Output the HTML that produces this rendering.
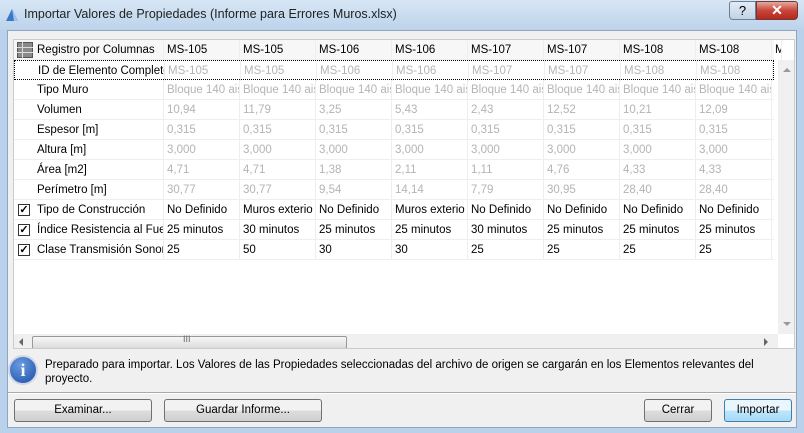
<!DOCTYPE html>
<html><head><meta charset="utf-8"><style>
*{box-sizing:border-box;margin:0;padding:0}
body{width:804px;height:433px;overflow:hidden;background:#b9d1ea;font-family:"Liberation Sans",sans-serif;font-size:11.5px;color:#000;position:relative}
.title{position:absolute;left:0;top:0;width:804px;height:30px;background:linear-gradient(#d7e6f5,#bcd3ea)}
.title span{position:absolute;left:24px;top:7px;font-size:12.5px;color:#222}
.client{position:absolute;left:7px;top:30px;width:790px;height:398px;background:#f0f0f0;border:1px solid #8ea6c0}
.grid{position:absolute;left:13px;top:39px;width:782px;height:310px;background:#fff;border:1px solid #ccc;overflow:hidden}
.row{position:absolute;left:0;height:20px;width:760px;border-bottom:1px solid #eee}
.c{position:absolute;top:0;height:20px;line-height:20px;white-space:nowrap;overflow:hidden;border-right:1px solid #eee;padding-left:3px}
.g{color:#b4b4b4}
.lab{left:0;width:150px;padding-left:23px}
.hdr{background:#f7f7f7}
.cb{position:absolute;left:4px;top:4px;width:12px;height:12px;border:1px solid #333;background:#fff;font-size:11px;line-height:10px;text-align:center;font-weight:bold}
.vs{position:absolute;left:764px;top:20px;width:17px;height:274px;background:#f0f0f0}
.hs{position:absolute;left:0;top:294px;width:764px;height:16px;background:#f0f0f0}
.thumb{position:absolute;left:18px;top:2px;width:315px;height:13px;border:1px solid #999;border-radius:2px;background:linear-gradient(#f6f6f6,#dcdcdc)}
.btn{position:absolute;height:23px;border:1px solid #707070;border-radius:3px;background:linear-gradient(#f2f2f2 50%,#dddddd 50%,#cfcfcf);text-align:center;line-height:21px}
.info{position:absolute;left:8px;top:355px;width:30px;height:30px;border-radius:50%;background:radial-gradient(circle at 40% 30%,#6a9be0,#1c4fa8);border:2px solid #d0d8e8;color:#fff;font:bold 18px "Liberation Serif",serif;text-align:center;line-height:26px}
</style></head><body>
<div class="title">
<svg style="position:absolute;left:5px;top:8px" width="14" height="14"><path d="M1 13 L7 1 L13 13 Z" fill="#3a78c8"/><path d="M7 1 L13 13 H9 Z" fill="#9cc4f0"/></svg>
<span>Importar Valores de Propiedades (Informe para Errores Muros.xlsx)</span>
<div style="position:absolute;left:729px;top:1px;width:27px;height:19px;border:1px solid #6d7f96;border-radius:3px 0 0 4px;background:linear-gradient(#e4ecf5,#c2d2e6);text-align:center;font-size:13px;line-height:17px">?</div>
<div style="position:absolute;left:756px;top:1px;width:42px;height:19px;border:1px solid #6d3a3a;border-radius:0 3px 4px 0;background:linear-gradient(#e8a89c,#c7463a 50%,#b8281c);color:#fff;text-align:center;font-weight:bold;font-size:14px;line-height:17px">✕</div>
</div>
<div class="client"></div>
<div class="grid">
<div class="row hdr" style="top:0;height:20px"><svg style="position:absolute;left:3px;top:2px" width="16" height="16"><rect x="0.5" y="0.5" width="15" height="15" fill="#8a8a8a" stroke="#555"/><path d="M5.5 0V16M0 5.5H16M0 10.5H16" stroke="#ddd"/></svg>
<div class="c lab">Registro por Columnas</div>
<div class="c" style="left:150px;width:76px">MS-105</div><div class="c" style="left:226px;width:76px">MS-105</div><div class="c" style="left:302px;width:76px">MS-106</div><div class="c" style="left:378px;width:76px">MS-106</div><div class="c" style="left:454px;width:76px">MS-107</div><div class="c" style="left:530px;width:76px">MS-107</div><div class="c" style="left:606px;width:76px">MS-108</div><div class="c" style="left:682px;width:76px">MS-108</div><div class="c" style="left:758px;width:10px">M</div></div>

<div class="row" style="top:20px;border:1px dotted #000"><div class="c lab">ID de Elemento Completo</div>
<div class="c g" style="left:150px;width:76px">MS-105</div><div class="c g" style="left:226px;width:76px">MS-105</div><div class="c g" style="left:302px;width:76px">MS-106</div><div class="c g" style="left:378px;width:76px">MS-106</div><div class="c g" style="left:454px;width:76px">MS-107</div><div class="c g" style="left:530px;width:76px">MS-107</div><div class="c g" style="left:606px;width:76px">MS-108</div><div class="c g" style="left:682px;width:76px">MS-108</div></div>

<div class="row" style="top:40px"><div class="c lab">Tipo Muro</div>
<div class="c g" style="left:150px;width:76px">Bloque 140 ais</div><div class="c g" style="left:226px;width:76px">Bloque 140 ais</div><div class="c g" style="left:302px;width:76px">Bloque 140 ais</div><div class="c g" style="left:378px;width:76px">Bloque 140 ais</div><div class="c g" style="left:454px;width:76px">Bloque 140 ais</div><div class="c g" style="left:530px;width:76px">Bloque 140 ais</div><div class="c g" style="left:606px;width:76px">Bloque 140 ais</div><div class="c g" style="left:682px;width:76px">Bloque 140 ais</div></div>

<div class="row" style="top:60px"><div class="c lab">Volumen</div>
<div class="c g" style="left:150px;width:76px">10,94</div><div class="c g" style="left:226px;width:76px">11,79</div><div class="c g" style="left:302px;width:76px">3,25</div><div class="c g" style="left:378px;width:76px">5,43</div><div class="c g" style="left:454px;width:76px">2,43</div><div class="c g" style="left:530px;width:76px">12,52</div><div class="c g" style="left:606px;width:76px">10,21</div><div class="c g" style="left:682px;width:76px">12,09</div></div>

<div class="row" style="top:80px"><div class="c lab">Espesor [m]</div>
<div class="c g" style="left:150px;width:76px">0,315</div><div class="c g" style="left:226px;width:76px">0,315</div><div class="c g" style="left:302px;width:76px">0,315</div><div class="c g" style="left:378px;width:76px">0,315</div><div class="c g" style="left:454px;width:76px">0,315</div><div class="c g" style="left:530px;width:76px">0,315</div><div class="c g" style="left:606px;width:76px">0,315</div><div class="c g" style="left:682px;width:76px">0,315</div></div>

<div class="row" style="top:100px"><div class="c lab">Altura [m]</div>
<div class="c g" style="left:150px;width:76px">3,000</div><div class="c g" style="left:226px;width:76px">3,000</div><div class="c g" style="left:302px;width:76px">3,000</div><div class="c g" style="left:378px;width:76px">3,000</div><div class="c g" style="left:454px;width:76px">3,000</div><div class="c g" style="left:530px;width:76px">3,000</div><div class="c g" style="left:606px;width:76px">3,000</div><div class="c g" style="left:682px;width:76px">3,000</div></div>

<div class="row" style="top:120px"><div class="c lab">Área [m2]</div>
<div class="c g" style="left:150px;width:76px">4,71</div><div class="c g" style="left:226px;width:76px">4,71</div><div class="c g" style="left:302px;width:76px">1,38</div><div class="c g" style="left:378px;width:76px">2,11</div><div class="c g" style="left:454px;width:76px">1,11</div><div class="c g" style="left:530px;width:76px">4,76</div><div class="c g" style="left:606px;width:76px">4,33</div><div class="c g" style="left:682px;width:76px">4,33</div></div>

<div class="row" style="top:140px"><div class="c lab">Perímetro [m]</div>
<div class="c g" style="left:150px;width:76px">30,77</div><div class="c g" style="left:226px;width:76px">30,77</div><div class="c g" style="left:302px;width:76px">9,54</div><div class="c g" style="left:378px;width:76px">14,14</div><div class="c g" style="left:454px;width:76px">7,79</div><div class="c g" style="left:530px;width:76px">30,95</div><div class="c g" style="left:606px;width:76px">28,40</div><div class="c g" style="left:682px;width:76px">28,40</div></div>

<div class="row" style="top:160px"><div class="cb">✓</div><div class="c lab">Tipo de Construcción</div>
<div class="c" style="left:150px;width:76px">No Definido</div><div class="c" style="left:226px;width:76px">Muros exterio</div><div class="c" style="left:302px;width:76px">No Definido</div><div class="c" style="left:378px;width:76px">Muros exterio</div><div class="c" style="left:454px;width:76px">No Definido</div><div class="c" style="left:530px;width:76px">No Definido</div><div class="c" style="left:606px;width:76px">No Definido</div><div class="c" style="left:682px;width:76px">No Definido</div></div>

<div class="row" style="top:180px"><div class="cb">✓</div><div class="c lab">Índice Resistencia al Fuego</div>
<div class="c" style="left:150px;width:76px">25 minutos</div><div class="c" style="left:226px;width:76px">30 minutos</div><div class="c" style="left:302px;width:76px">25 minutos</div><div class="c" style="left:378px;width:76px">25 minutos</div><div class="c" style="left:454px;width:76px">30 minutos</div><div class="c" style="left:530px;width:76px">25 minutos</div><div class="c" style="left:606px;width:76px">25 minutos</div><div class="c" style="left:682px;width:76px">25 minutos</div></div>

<div class="row" style="top:200px"><div class="cb">✓</div><div class="c lab">Clase Transmisión Sonora</div>
<div class="c" style="left:150px;width:76px">25</div><div class="c" style="left:226px;width:76px">50</div><div class="c" style="left:302px;width:76px">30</div><div class="c" style="left:378px;width:76px">30</div><div class="c" style="left:454px;width:76px">25</div><div class="c" style="left:530px;width:76px">25</div><div class="c" style="left:606px;width:76px">25</div><div class="c" style="left:682px;width:76px">25</div></div>

<div class="vs"><div style="position:absolute;left:5px;top:8px;border:4px solid transparent;border-bottom-color:#999;border-top:none;width:0"></div><div style="position:absolute;left:5px;bottom:8px;border:4px solid transparent;border-top-color:#999;border-bottom:none"></div></div>
<div class="hs"><div style="position:absolute;left:5px;top:4px;border:4px solid transparent;border-right-color:#666;border-left:none"></div><div class="thumb"><span style="position:absolute;left:150px;top:-3px;font-size:9px;color:#666">III</span></div><div style="position:absolute;left:750px;top:4px;border:4px solid transparent;border-left-color:#666;border-right:none"></div></div>
</div>
<div class="info">i</div>
<div style="position:absolute;left:45px;top:358px;line-height:14px;width:710px">Preparado para importar. Los Valores de las Propiedades seleccionadas del archivo de origen se cargarán en los Elementos relevantes del proyecto.</div>
<div style="position:absolute;left:8px;top:392px;width:788px;border-top:1px solid #aaa;border-bottom:1px solid #fff"></div>
<div class="btn" style="left:14px;top:399px;width:138px">Examinar...</div>
<div class="btn" style="left:164px;top:399px;width:158px">Guardar Informe...</div>
<div class="btn" style="left:644px;top:399px;width:68px">Cerrar</div>
<div class="btn" style="left:724px;top:399px;width:68px;border-color:#3c7fb1;background:linear-gradient(#eaf6fd 50%,#bee6fd 50%,#a7d9f5)">Importar</div>
</body></html>
